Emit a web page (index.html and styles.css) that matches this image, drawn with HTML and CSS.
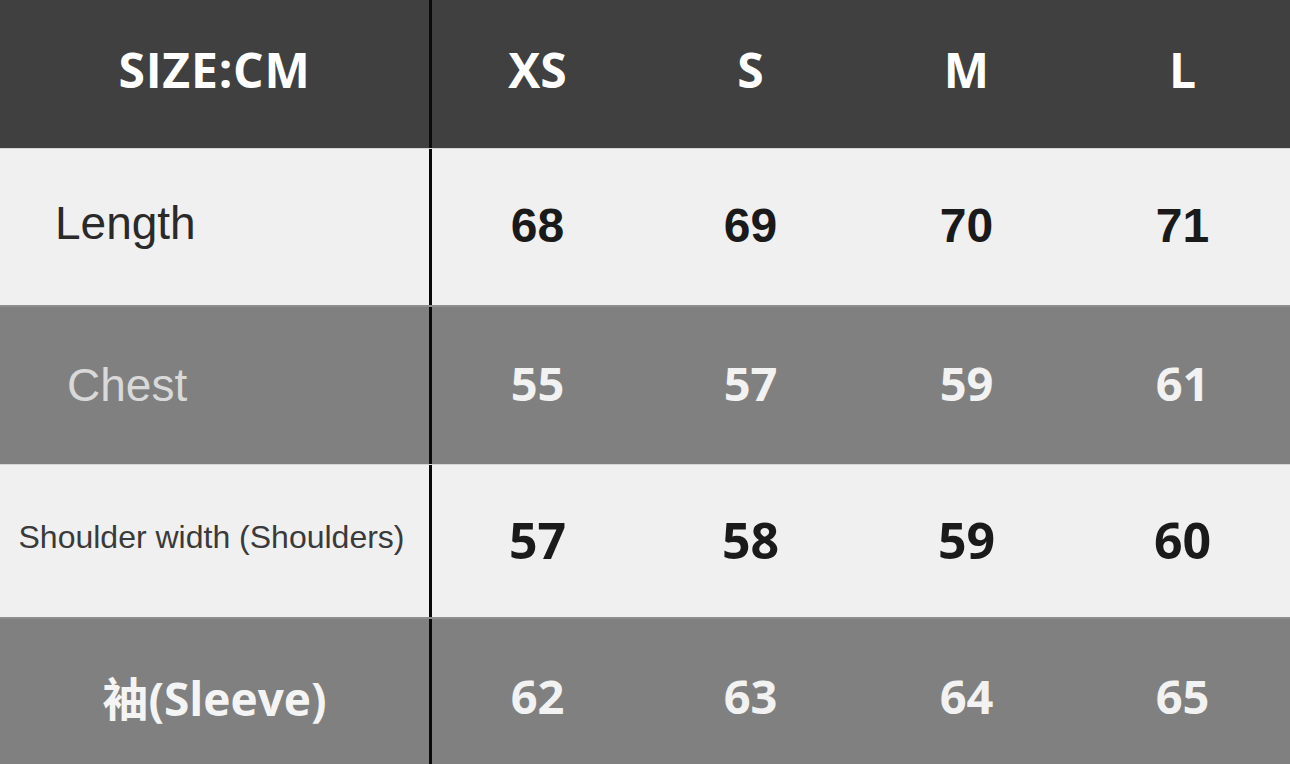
FILE: index.html
```html
<!DOCTYPE html>
<html lang="en">
<head>
<meta charset="utf-8">
<title>Size chart</title>
<link rel="stylesheet" href="styles.css">
</head>
<body>
<div class="chart">
  <div class="row head">
    <div class="label">SIZE:CM</div>
    <div class="cell">XS</div>
    <div class="cell">S</div>
    <div class="cell">M</div>
    <div class="cell">L</div>
  </div>
  <div class="row light r-length">
    <div class="label">Length</div>
    <div class="cell">68</div>
    <div class="cell">69</div>
    <div class="cell">70</div>
    <div class="cell">71</div>
  </div>
  <div class="row gray r-chest">
    <div class="label">Chest</div>
    <div class="cell">55</div>
    <div class="cell">57</div>
    <div class="cell">59</div>
    <div class="cell">61</div>
  </div>
  <div class="row light r-shoulder">
    <div class="label">Shoulder width (Shoulders)</div>
    <div class="cell">57</div>
    <div class="cell">58</div>
    <div class="cell">59</div>
    <div class="cell">60</div>
  </div>
  <div class="row gray r-sleeve">
    <div class="label">袖(Sleeve)</div>
    <div class="cell">62</div>
    <div class="cell">63</div>
    <div class="cell">64</div>
    <div class="cell">65</div>
  </div>
</div>
</body>
</html>
```

FILE: styles.css
```css
html, body {
  margin: 0;
  padding: 0;
  width: 1290px;
  height: 764px;
  overflow: hidden;
  background: #808080;
}

.chart {
  display: flex;
  flex-direction: column;
  width: 1290px;
}

.row {
  display: grid;
  grid-template-columns: 432px 211px 215px 217px 1fr;
  align-items: stretch;
}

.label {
  box-sizing: border-box;
  border-right: 3px solid #0a0a0a;
  display: flex;
  align-items: center;
  justify-content: center;
}

.cell {
  display: flex;
  align-items: center;
  justify-content: center;
  font-family: "Open Sans", "Liberation Sans", sans-serif;
  font-weight: 700;
  font-size: 47px;
}

/* header */
.head {
  height: 148px;
  background: #404040;
  color: #ffffff;
}
.head .label,
.head .cell {
  font-family: "Open Sans", "Liberation Sans", sans-serif;
  font-weight: 700;
  font-size: 48px;
  padding-bottom: 10px;
}
.head .label {
  letter-spacing: 0.8px;
}

.light {
  background: #f0f0f0;
  color: #1a1a1a;
  border-top: 1px solid #d6d6d6;
}
.gray {
  background: #808080;
  color: #f2f2f2;
  border-top: 2px solid #8e8e8e;
}

.r-length {
  height: 156px;
}
.r-length .label {
  justify-content: flex-start;
  padding-left: 55px;
  padding-bottom: 8px;
  font-family: "Liberation Sans", Arial, sans-serif;
  font-size: 46px;
  color: #2a2a2a;
}
.r-length .cell {
  font-family: "Liberation Sans", Arial, sans-serif;
  font-size: 48px;
  padding-bottom: 4px;
}

.r-chest {
  height: 157px;
}
.r-chest .label {
  justify-content: flex-start;
  padding-left: 67px;
  padding-bottom: 2px;
  font-family: "Liberation Sans", Arial, sans-serif;
  font-size: 46px;
  color: #d9d9d9;
}
.r-chest .cell {
  padding-bottom: 6px;
}

.r-shoulder {
  height: 152px;
}
.r-shoulder .label {
  font-family: "Liberation Sans", Arial, sans-serif;
  font-size: 32px;
  color: #3a3a3a;
  padding-bottom: 8px;
  padding-right: 6px;
}
.r-shoulder .cell {
  font-size: 50px;
  color: #1a1a1a;
  padding-bottom: 2px;
}

.r-sleeve {
  height: 162px;
}
.r-sleeve .label,
.r-sleeve .cell {
  padding-bottom: 8px;
}
.r-sleeve .label {
  font-family: "Open Sans", "Noto Sans CJK SC", sans-serif;
  font-weight: 700;
  font-size: 46px;
  color: #f4f4f4;
}
```
